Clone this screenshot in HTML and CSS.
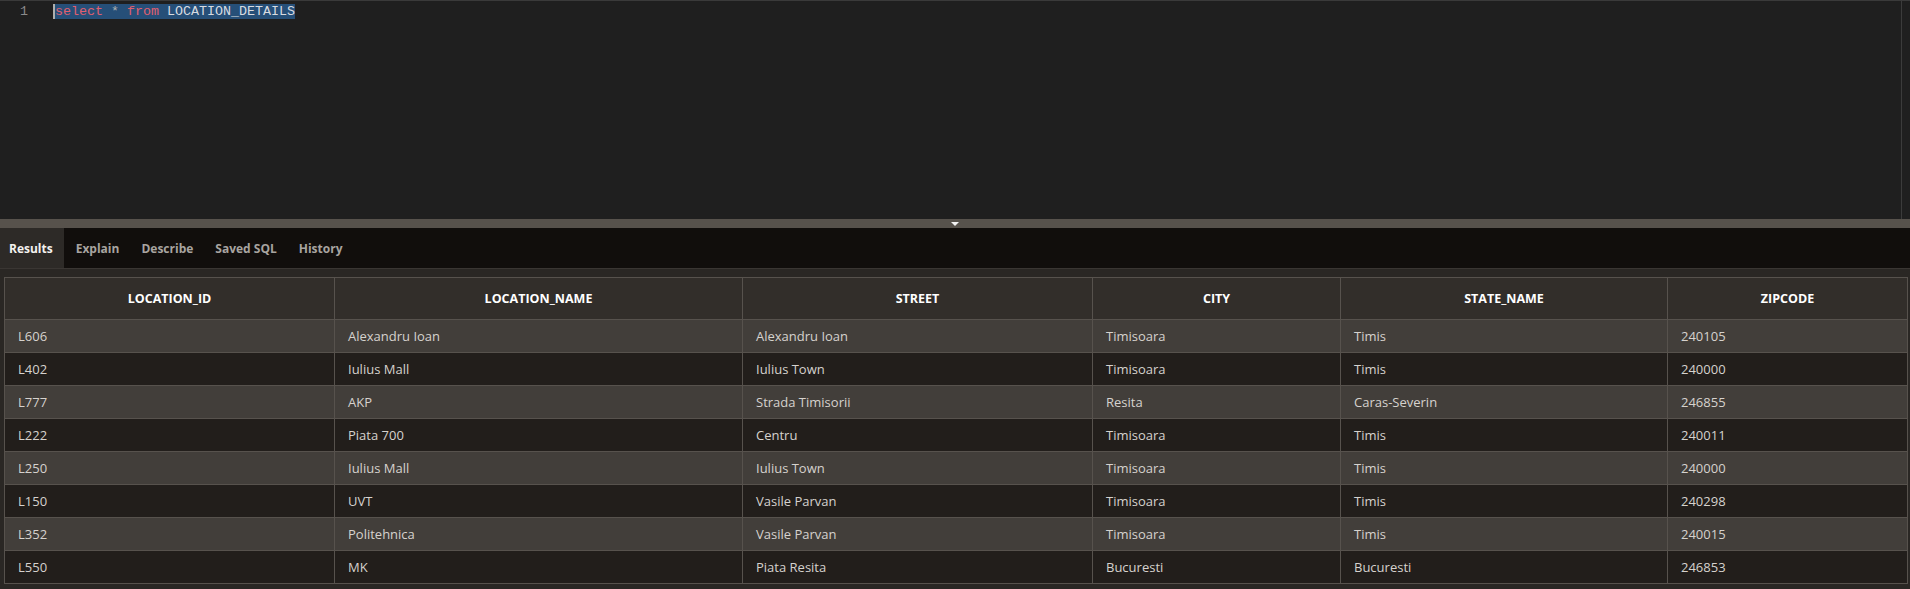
FILE: index.html
```html
<!DOCTYPE html>
<html>
<head>
<meta charset="utf-8">
<link rel="stylesheet" href="styles.css">
</head>
<body>
<div class="editor">
  <div class="gutter">1</div>
  <div class="code"><span class="sel"><span class="kw">select</span> <span class="op">*</span> <span class="kw">from</span> LOCATION_DETAILS</span></div>
  <div class="vscroll"></div>
</div>
<div class="divider"><span class="tri"></span></div>
<div class="tabs">
  <div class="tab active">Results</div>
  <div class="tab">Explain</div>
  <div class="tab">Describe</div>
  <div class="tab">Saved SQL</div>
  <div class="tab">History</div>
</div>
<div class="results">
  <table class="grid">
    <colgroup>
      <col style="width:330px"><col style="width:408px"><col style="width:350px"><col style="width:248px"><col style="width:327px"><col style="width:240px">
    </colgroup>
    <thead>
      <tr><th>LOCATION_ID</th><th>LOCATION_NAME</th><th>STREET</th><th>CITY</th><th>STATE_NAME</th><th>ZIPCODE</th></tr>
    </thead>
    <tbody>
      <tr><td>L606</td><td>Alexandru Ioan</td><td>Alexandru Ioan</td><td>Timisoara</td><td>Timis</td><td>240105</td></tr>
      <tr><td>L402</td><td>Iulius Mall</td><td>Iulius Town</td><td>Timisoara</td><td>Timis</td><td>240000</td></tr>
      <tr><td>L777</td><td>AKP</td><td>Strada Timisorii</td><td>Resita</td><td>Caras-Severin</td><td>246855</td></tr>
      <tr><td>L222</td><td>Piata 700</td><td>Centru</td><td>Timisoara</td><td>Timis</td><td>240011</td></tr>
      <tr><td>L250</td><td>Iulius Mall</td><td>Iulius Town</td><td>Timisoara</td><td>Timis</td><td>240000</td></tr>
      <tr><td>L150</td><td>UVT</td><td>Vasile Parvan</td><td>Timisoara</td><td>Timis</td><td>240298</td></tr>
      <tr><td>L352</td><td>Politehnica</td><td>Vasile Parvan</td><td>Timisoara</td><td>Timis</td><td>240015</td></tr>
      <tr><td>L550</td><td>MK</td><td>Piata Resita</td><td>Bucuresti</td><td>Bucuresti</td><td>246853</td></tr>
    </tbody>
  </table>
</div>
</body>
</html>
```
FILE: styles.css
```css
html, body {
  margin: 0;
  padding: 0;
  background: #2a2724;
  overflow: hidden;
  width: 1910px;
  height: 589px;
}
body {
  font-family: "Open Sans", "Liberation Sans", sans-serif;
}
.editor {
  height: 218px;
  background: #1f1f1f;
  border-top: 1px solid #3a3a3a;
  display: flex;
  position: relative;
}
.gutter {
  width: 55px;
  box-sizing: border-box;
  padding-left: 20px;
  padding-top: 2px;
  font-family: "Liberation Mono", monospace;
  font-size: 13.33px;
  line-height: 17px;
  color: #8a8a8a;
}
.code {
  flex: 1;
  padding-top: 2px;
  font-family: "Liberation Mono", monospace;
  font-size: 13.33px;
  line-height: 17px;
  color: #d8dbe0;
}
.sel {
  background: #264f78;
  border-left: 2px solid #aeafad;
  margin-left: -2px;
}
.kw { color: #e05f6f; }
.op { color: #b0b0b0; }
.vscroll {
  width: 1px;
  background: #3b3b3b;
  margin-right: 8px;
}
.divider {
  height: 9px;
  background: #57524c;
  display: flex;
  justify-content: center;
  align-items: center;
}
.tri {
  width: 0;
  height: 0;
  border-left: 4px solid transparent;
  border-right: 4px solid transparent;
  border-top: 4px solid #f2f2f2;
}
.tabs {
  height: 40px;
  background: #110e0c;
  display: flex;
  border-bottom: 1px solid #3a3633;
}
.tab {
  padding: 0 10px;
  display: flex;
  align-items: center;
  font-size: 12px;
  font-weight: 700;
  color: #a8a4a0;
}
.tab.active {
  background: #2d2a27;
  color: #f4f2ef;
  padding: 0 11px 0 9px;
}
.tab + .tab { margin-left: 2px; }
.results {
  padding: 8px 3px 0 4px;
}
.grid {
  border-collapse: collapse;
  table-layout: fixed;
  width: 1903px;
  border: 1px solid #5e5954;
}
.grid th {
  height: 41px;
  background: #322e2a;
  color: #ffffff;
  font-size: 12.5px;
  font-weight: 700;
  text-align: center;
  border: 1px solid #57524d;
  padding: 0;
}
.grid td {
  height: 32px;
  padding: 0 0 0 13px;
  font-size: 13px;
  color: #d6d2ce;
  border: 1px solid #57524d;
  white-space: nowrap;
}
.grid tbody tr:nth-child(odd) td { background: #423e3a; }
.grid tbody tr:nth-child(even) td { background: #221e1b; }
```
